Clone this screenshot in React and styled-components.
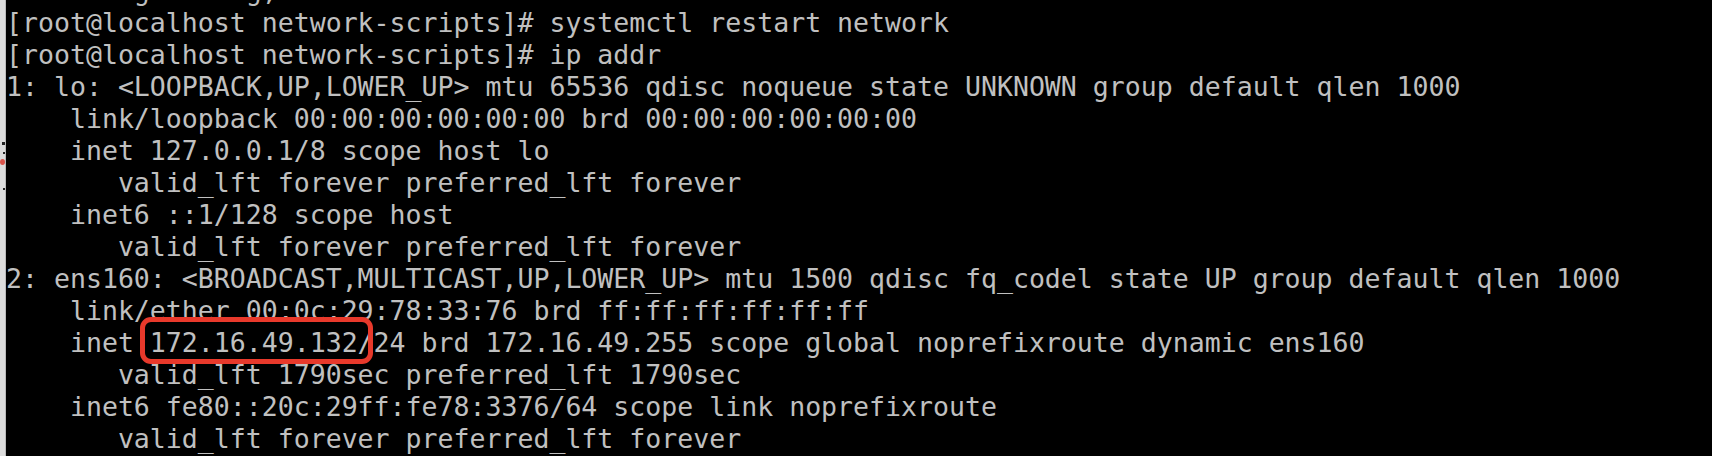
import React from 'react'
import styled, { createGlobalStyle } from 'styled-components'

const Global = createGlobalStyle`
html, body {
  margin: 0;
  padding: 0;
  background: #000;
}
`

const Screen = styled.div`
width: 1712px;
height: 456px;
display: flex;
overflow: hidden;
background: #000;
`

const Gutter = styled.div`
width: 5px;
flex-shrink: 0;
background: #dcdcdc;
border-right: 1px solid #b9b9b9;
display: flex;
flex-direction: column;
align-items: flex-end;
padding-top: 142px;
gap: 5px;
`

const Tick = styled.span`
width: ${props => props.w || 2}px;
height: ${props => props.h || 2}px;
border-radius: ${props => props.round ? '50%' : '0'};
background: ${props => props.color || '#222'};
margin-bottom: ${props => props.after || 0}px;
`

const Console = styled.pre`
flex: 1;
margin: -25px 0 0 0;
padding: 0;
font-family: "DejaVu Sans Mono", "Liberation Mono", monospace;
font-size: 26.55px;
line-height: 32px;
color: #c0c0c0;
white-space: pre;
overflow: hidden;
`

const Mark = styled.span`
display: inline-block;
position: relative;

&::after {
  content: '';
  position: absolute;
  left: -10px;
  right: 1px;
  top: -10px;
  bottom: -5px;
  border: 5px solid #e8392b;
  border-radius: 11px;
}
`

const lines = [
  'Reloading config, wait until done.',
  '[root@localhost network-scripts]# systemctl restart network',
  '[root@localhost network-scripts]# ip addr',
  '1: lo: <LOOPBACK,UP,LOWER_UP> mtu 65536 qdisc noqueue state UNKNOWN group default qlen 1000',
  '    link/loopback 00:00:00:00:00:00 brd 00:00:00:00:00:00',
  '    inet 127.0.0.1/8 scope host lo',
  '       valid_lft forever preferred_lft forever',
  '    inet6 ::1/128 scope host',
  '       valid_lft forever preferred_lft forever',
  '2: ens160: <BROADCAST,MULTICAST,UP,LOWER_UP> mtu 1500 qdisc fq_codel state UP group default qlen 1000',
  '    link/ether 00:0c:29:78:33:76 brd ff:ff:ff:ff:ff:ff',
]

const tail = [
  '       valid_lft 1790sec preferred_lft 1790sec',
  '    inet6 fe80::20c:29ff:fe78:3376/64 scope link noprefixroute',
  '       valid_lft forever preferred_lft forever',
]

const App = () => {
  return (
    <>
      <Global />
      <Screen>
        <Gutter>
          <Tick w={3} h={3} after={2} />
          <Tick w={2} h={2} />
          <Tick w={5} h={6} round color="#d9534a" after={18} />
          <Tick w={2} h={2} />
        </Gutter>
        <Console>
          {lines.join('\n')}
          {'\n    inet '}
          <Mark>172.16.49.132/</Mark>
          {'24 brd 172.16.49.255 scope global noprefixroute dynamic ens160\n'}
          {tail.join('\n')}
        </Console>
      </Screen>
    </>
  )
}

export default App
